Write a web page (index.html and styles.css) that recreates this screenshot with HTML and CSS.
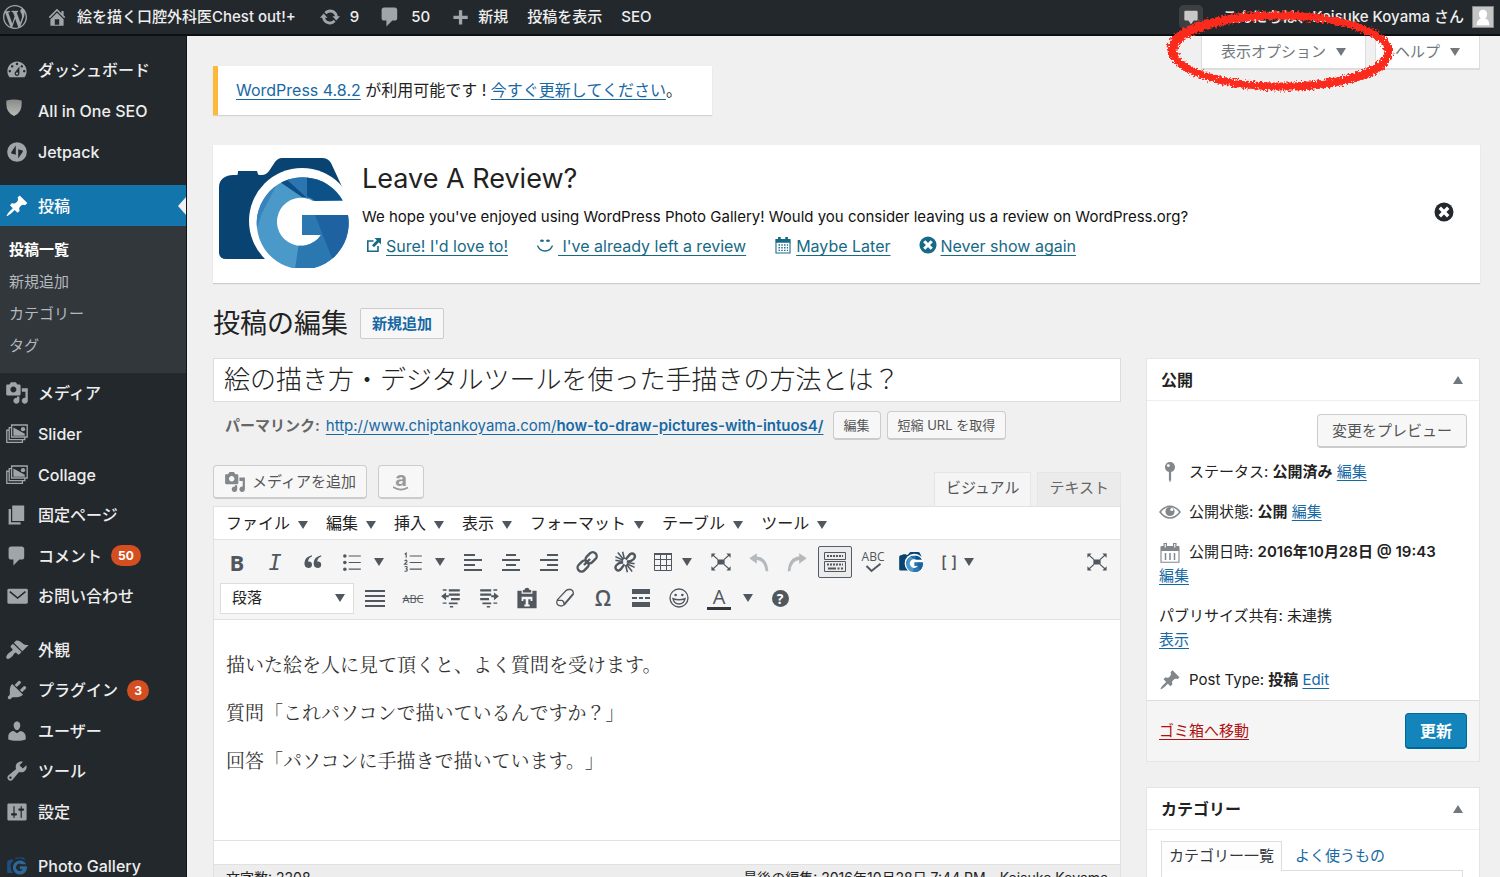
FILE: index.html
```html
<!DOCTYPE html>
<html lang="ja">
<head>
<meta charset="utf-8">
<meta name="viewport" content="width=device-width, initial-scale=1">
<title>投稿の編集 ‹ 絵を描く口腔外科医Chest out!+ — WordPress</title>
<link rel="stylesheet" href="styles.css">
</head>
<body>
<svg class="sprite" aria-hidden="true">
  <defs>
    <clipPath id="g-shape"><path d="M125 43A46 46 0 1 0 130 57H84V77H103A24 24 0 1 1 95 43Z"/></clipPath>
    <filter id="rough" x="-5%" y="-10%" width="110%" height="120%">
      <feTurbulence type="fractalNoise" baseFrequency="0.45" numOctaves="2" seed="4" result="n"/>
      <feDisplacementMap in="SourceGraphic" in2="n" scale="8" xChannelSelector="R" yChannelSelector="G"/>
    </filter>
  </defs>
  <symbol id="camera-g" viewBox="0 0 131 110">
    <path fill="#084372" d="M1 29C1 21 8 17 15 17H19Q20 17 20 13H39Q40 17 41 17H44Q48 17 51 13L57 4Q60 0 64 0H104Q110 0 113 5L126 33L84 101H8Q1 101 1 94Z"/>
    <circle cx="84" cy="63" r="53" fill="#fff"/>
    <path fill="#fff" d="M84 63L131 30V110H84Z"/>
    <g clip-path="url(#g-shape)">
      <rect x="36" y="15" width="96" height="96" fill="#4a99c8"/>
      <path fill="#3983bd" d="M36 15H62L59 26L43 57L38 70H36Z"/>
      <path fill="#3983bd" d="M38 54L43 58L39 70Z"/>
      <path fill="#0d4e86" d="M59 22L66 17L92 40L84 39Z"/>
      <path fill="#2b76b0" d="M64 12H90V41L66 19Z"/>
      <path fill="#0d5189" d="M89 12H131V42L97 43L89 38Z"/>
      <path fill="#2b78b1" d="M81 84L77 111H131L108 77L97 57H84V77Z"/>
      <path fill="#1e62a2" d="M97 57H131V100H114Z"/>
    </g>
  </symbol>
  <symbol id="camera-g-bare" viewBox="0 0 131 110">
    <path fill="#1c5a96" d="M1 29C1 21 8 17 15 17H19Q20 17 20 13H39Q40 17 41 17H44Q48 17 51 13L57 4Q60 0 64 0H104Q110 0 113 5L119 20A55 55 0 0 0 40 101H8Q1 101 1 94Z"/>
    <path fill="#2f7ab5" d="M125 43A46 46 0 1 0 130 57H84V77H103A24 24 0 1 1 95 43Z"/>
  </symbol>
  <symbol id="wp" viewBox="0 0 20 20"><path d="M20 10c0-5.51-4.49-10-10-10C4.48 0 0 4.49 0 10c0 5.52 4.48 10 10 10 5.51 0 10-4.48 10-10zM7.78 15.37L4.37 6.22c.55-.02 1.17-.08 1.17-.08.5-.06.44-1.13-.06-1.11 0 0-1.45.11-2.37.11-.18 0-.37 0-.58-.01C4.12 2.69 6.87 1.11 10 1.11c2.33 0 4.45.87 6.05 2.34-.68-.11-1.65.39-1.65 1.58 0 .74.45 1.36.9 2.1.35.61.55 1.36.55 2.46 0 1.49-1.4 5-1.4 5l-3.03-8.37c.54-.02.82-.17.82-.17.5-.05.44-1.25-.06-1.22 0 0-1.44.12-2.38.12-.87 0-2.33-.12-2.33-.12-.5-.03-.56 1.2-.06 1.22l.92.08 1.26 3.41zM17.41 10c.24-.64.74-1.87.43-4.25.7 1.29 1.05 2.71 1.05 4.25 0 3.29-1.73 6.24-4.4 7.78.97-2.59 1.94-5.2 2.92-7.78zM6.1 18.09C3.12 16.65 1.11 13.53 1.11 10c0-1.3.23-2.48.72-3.59C3.25 10.3 4.67 14.2 6.1 18.09zm4.03-6.63l2.58 6.98c-.86.29-1.76.45-2.71.45-.79 0-1.57-.11-2.29-.33.81-2.38 1.62-4.74 2.42-7.1z"/></symbol>
  <symbol id="home" viewBox="0 0 20 20"><path d="M16 8.5l1.53 1.53-1.06 1.06L10 4.6l-6.47 6.49-1.06-1.06L10 2.5l4 4v-2h2v4zm-6-2.46l6 5.99V18H4v-5.97zM12 17v-5H8v5h4z"/></symbol>
  <symbol id="update" viewBox="0 0 20 20"><path d="M10.2 3.28c3.53 0 6.43 2.61 6.92 6h2.08l-3.5 4-3.5-4h2.32c-.45-1.97-2.21-3.45-4.32-3.45-1.45 0-2.73.71-3.54 1.78L4.95 5.66C6.23 4.2 8.11 3.28 10.2 3.28zm-.4 13.44c-3.52 0-6.43-2.61-6.92-6H.8l3.5-4c1.17 1.33 2.33 2.67 3.5 4H5.48c.45 1.97 2.21 3.45 4.32 3.45 1.45 0 2.73-.71 3.54-1.78l1.71 1.95c-1.28 1.46-3.15 2.38-5.25 2.38z"/></symbol>
  <symbol id="comment" viewBox="0 0 20 20"><path d="M5 2h9c1.1 0 2 .9 2 2v7c0 1.1-.9 2-2 2h-2l-5 5v-5H5c-1.1 0-2-.9-2-2V4c0-1.1.9-2 2-2z"/></symbol>
  <symbol id="note" viewBox="0 0 20 20"><path d="M4 3h12c.8 0 1.400.6 1.400 1.400v8.200c0 .8-.6 1.400-1.400 1.400h-3l-3 4-3-4H4c-.8 0-1.400-.6-1.400-1.400V4.400C2.600 3.600 3.200 3 4 3z"/></symbol>
  <symbol id="plus" viewBox="0 0 20 20"><path d="M17 7v3h-5v5H9v-5H4V7h5V2h3v5h5z"/></symbol>
  <symbol id="dashboard" viewBox="0 0 20 20"><path d="M3.76 16h12.480c1.100-1.370 1.760-3.110 1.760-5 0-4.420-3.580-8-8-8s-8 3.580-8 8c0 1.890.66 3.630 1.760 5zM10 4c.55 0 1 .45 1 1s-.45 1-1 1-1-.45-1-1 .45-1 1-1zM6 6c.55 0 1 .45 1 1s-.45 1-1 1-1-.45-1-1 .45-1 1-1zm8 0c.55 0 1 .45 1 1s-.45 1-1 1-1-.45-1-1 .45-1 1-1zm-5.370 5.550L12 7v6c0 1.100-.9 2-2 2s-2-.9-2-2c0-.57.24-1.080.63-1.450zM4 10c.55 0 1 .45 1 1s-.45 1-1 1-1-.45-1-1 .45-1 1-1zm12 0c.55 0 1 .45 1 1s-.45 1-1 1-1-.45-1-1 .45-1 1-1zm-5 3c0-.55-.45-1-1-1s-1 .45-1 1 .45 1 1 1 1-.45 1-1z"/></symbol>
  <symbol id="shield" viewBox="0 0 20 20"><linearGradient id="sh" x2="0" y2="1"><stop offset="0" stop-color="#888b87"/><stop offset="1" stop-color="#b9bbb7"/></linearGradient><path fill="url(#sh)" d="M1.500 1.500Q9-.5 16.500 1.500Q18 13 9 17Q0 13 1.500 1.500Z"/></symbol>
  <symbol id="jetpack" viewBox="0 0 20 20"><circle cx="10" cy="10" r="8.200"/><path fill="#23282d" d="M9 4.500V12.200L5.400 11.200Q4.800 11 5.200 10.200ZM11 15.500V7.800L14.600 8.800Q15.200 9 14.800 9.800Z"/></symbol>
  <symbol id="pin" viewBox="0 0 20 20"><path d="M10.440 3.020l1.820-1.820 6.360 6.350-1.830 1.820c-1.050-.68-2.480-.57-3.410.36l-.75.75c-.92.93-1.040 2.350-.35 3.410l-1.830 1.820-2.410-2.410-2.800 2.790c-.42.42-3.380 2.710-3.800 2.290s1.860-3.390 2.280-3.810l2.790-2.790L4.100 9.360l1.830-1.820c1.050.69 2.480.57 3.400-.36l.75-.75c.93-.92 1.050-2.350.36-3.410z"/></symbol>
  <symbol id="media" viewBox="0 0 20 20"><path d="M13 11V4c0-.55-.45-1-1-1h-1.670L9 1H5L3.670 3H2c-.55 0-1 .45-1 1v7c0 .55.45 1 1 1h10c.55 0 1-.45 1-1zM7 4.500c1.380 0 2.500 1.120 2.500 2.500S8.380 9.500 7 9.500 4.500 8.380 4.500 7 5.620 4.500 7 4.500zM14 6h5v10.500c0 1.380-1.120 2.500-2.500 2.500S14 17.880 14 16.500s1.120-2.500 2.500-2.500c.17 0 .34.02.5.05V9h-3V6zm-4 8.050V13h2v3.500c0 1.380-1.120 2.500-2.500 2.500S7 17.880 7 16.500 8.120 14 9.500 14c.17 0 .34.02.5.05z"/></symbol>
  <symbol id="images" viewBox="0 0 20 20"><path fill="none" stroke="currentColor" stroke-width="1.100" d="M5.500 2.500H18.500V12.500H5.500ZM5 4.700H3.500V14.700H16.500V13M3 6.900H1.500V17H14.500V15.200"/><path d="M7 4.500L16.500 9.800V11.500H7Z"/><circle cx="15" cy="6" r="1.800"/></symbol>
  <symbol id="page" viewBox="0 0 20 20"><path d="M6 15V2h10v13H6zm-1 1h8v2H3V5h2v11z"/></symbol>
  <symbol id="mail" viewBox="0 0 20 20"><rect x="2" y="4" width="17" height="12.500" rx="1.200"/><path fill="none" stroke="#23282d" stroke-width="1.300" d="M4 6.300L10.500 11.700L17 6.300"/></symbol>
  <symbol id="brush" viewBox="0 0 20 20"><path d="M14.480 11.060L7.410 3.990l1.500-1.500c.5-.56 2.300-.47 3.510.32 1.210.8 1.430 1.280 2.910 2.100 1.180.64 2.450 1.260 4.450.85zm-.71.71L6.700 4.700 4.930 6.470c-.39.39-.39 1.020 0 1.410l1.060 1.060c.39.39.39 1.030 0 1.420-.6.6-1.430 1.110-2.210 1.690-.35.26-.7.53-1.010.84C1.430 14.230.4 16.080 1.400 17.070c.99 1 2.840-.03 4.180-1.360.31-.31.58-.66.85-1.020.57-.78 1.080-1.610 1.690-2.210.39-.39 1.020-.39 1.410 0l1.060 1.060c.39.39 1.020.39 1.410 0z"/></symbol>
  <symbol id="plug" viewBox="0 0 20 20"><path d="M13.110 4.360L9.870 7.600 8 5.730l3.240-3.240c.35-.34 1.050-.2 1.560.32.52.51.66 1.210.31 1.550zm-8 1.770l.91-1.120 9.010 9.010-1.190.84c-.71.71-2.630 1.160-3.820 1.160H6.140L4.900 17.260c-.59.59-1.540.59-2.120 0-.59-.58-.59-1.530 0-2.120l1.240-1.240v-3.880c0-1.130.4-3.190 1.090-3.890zm7.260 3.970l3.240-3.240c.34-.35 1.040-.21 1.550.31.52.51.66 1.210.31 1.550l-3.240 3.250z"/></symbol>
  <symbol id="user" viewBox="0 0 20 20"><path d="M10 9.250c-2.270 0-2.730-3.440-2.730-3.440C7 4.020 7.820 2 9.970 2c2.160 0 2.980 2.020 2.710 3.810 0 0-.41 3.440-2.680 3.440zm0 2.570L12.720 10c2.390 0 4.520 2.330 4.520 4.530v2.490s-3.650 1.130-7.240 1.130c-3.650 0-7.240-1.130-7.240-1.130v-2.490c0-2.250 1.940-4.480 4.470-4.480z"/></symbol>
  <symbol id="wrench" viewBox="0 0 20 20"><path d="M16.680 9.770c-1.340 1.340-3.300 1.670-4.950.99l-5.410 6.520c-.99.99-2.590.99-3.580 0s-.99-2.590 0-3.570l6.520-5.420c-.68-1.650-.35-3.610.99-4.950 1.280-1.280 3.120-1.620 4.720-1.060l-2.890 2.890 2.820 2.820 2.860-2.870c.53 1.580.18 3.390-1.080 4.650zM3.810 16.210c.4.39 1.040.39 1.430 0 .4-.4.4-1.040 0-1.430-.39-.4-1.030-.4-1.430 0-.39.39-.39 1.030 0 1.430z"/></symbol>
  <symbol id="sliders" viewBox="0 0 20 20"><path d="M18 16V4c0-.55-.45-1-1-1H3c-.55 0-1 .45-1 1v12c0 .55.45 1 1 1h14c.55 0 1-.45 1-1zM8 11h1c.55 0 1 .45 1 1s-.45 1-1 1H8v1.500c0 .28-.22.5-.5.5s-.5-.22-.5-.5V13H6c-.55 0-1-.45-1-1s.45-1 1-1h1V5.500c0-.28.22-.5.5-.5s.5.22.5.5V11zm5-2h-1c-.55 0-1-.45-1-1s.45-1 1-1h1V5.500c0-.28.22-.5.5-.5s.5.22.5.5V7h1c.55 0 1 .45 1 1s-.45 1-1 1h-1v5.500c0 .28-.22.5-.5.5s-.5-.22-.5-.5V9z"/></symbol>
  <symbol id="cross-circle" viewBox="0 0 20 20"><circle cx="10" cy="10" r="9.500"/><path fill="none" stroke="#fff" stroke-width="3.400" d="M5.800 5.800L14.200 14.200M14.200 5.800L5.800 14.200"/></symbol>
  <symbol id="external" viewBox="0 0 16 16"><path fill="none" stroke="currentColor" stroke-width="1.600" d="M7.500 4H1.800V14.200H12V9"/><path d="M8.500 1H15V7.500L12.800 5.300L8 10.200L6 8.200L10.800 3.300Z"/></symbol>
  <symbol id="smile" viewBox="0 0 18 16"><path fill="none" stroke="currentColor" stroke-width="1.300" d="M1.500 8.500Q3.500 14 9 14T16.500 8.500"/><path fill="none" stroke="currentColor" stroke-width="1.800" d="M4.500 4.500Q6 2.500 7.500 4.500M10.500 4.500Q12 2.500 13.500 4.500"/></symbol>
  <symbol id="cal" viewBox="0 0 18 20"><path fill="none" stroke="currentColor" stroke-width="1.200" d="M1.200 4H16.800V18.800H1.200Z"/><path d="M1 4H17V7.500H1ZM3.500 1H6.500V5.500H3.500ZM11.500 1H14.500V5.500H11.500Z"/><path fill="none" stroke="currentColor" stroke-width="1.600" stroke-dasharray="1.600 1.500" d="M4 10H14.500M4 13H14.500M4 16H14.500"/></symbol>
  <symbol id="cal-bars" viewBox="0 0 20 20"><path fill="none" stroke="currentColor" stroke-width="1.100" d="M1 4H19V19.200H1Z"/><path d="M1 3H19V8H1ZM3.500 0H7V4H3.500ZM13 0H16.500V4H13Z"/><path fill="#fff" d="M4.700 1H5.800V4.500H4.700ZM14.200 1H15.300V4.500H14.200Z"/><path fill="none" stroke="currentColor" stroke-width="1.500" d="M5.500 10V17M10 10V17M14.500 10V17"/></symbol>
  <symbol id="status-pin" viewBox="0 0 20 20"><circle cx="10" cy="5.500" r="4.600"/><path d="M9 9H11V17L10 19.500L9 17Z"/><circle cx="8.500" cy="4.200" r="1.300" fill="#fff"/></symbol>
  <symbol id="eye" viewBox="0 0 22 20"><path fill="none" stroke="currentColor" stroke-width="1.500" d="M1 10Q5.500 4.200 11 4.200T21 10Q16.500 16 11 16T1 10Z"/><circle cx="11" cy="9.500" r="4.600"/><circle cx="12.800" cy="7.600" r="1.500" fill="#fff"/></symbol>
  <symbol id="quote" viewBox="0 0 20 20"><path d="M9 4.500Q5.500 5.500 5 9.500Q9 9 9 12.800Q8.800 16 5.400 16Q1.400 15.800 1.400 11Q1.600 5 9 3.200ZM18.200 4.500Q14.700 5.500 14.200 9.500Q18.200 9 18.200 12.800Q18 16 14.600 16Q10.600 15.800 10.600 11Q10.800 5 18.200 3.200Z"/></symbol>
  <symbol id="ul" viewBox="0 0 20 20"><path fill="none" stroke="currentColor" stroke-width="1" d="M7 4.500H18M7 10.500H18M7 16.500H18"/><circle cx="3.500" cy="4.500" r="1.600"/><circle cx="3.500" cy="10.500" r="1.600"/><circle cx="3.500" cy="16.500" r="1.600"/></symbol>
  <symbol id="ol" viewBox="0 0 20 20"><path fill="none" stroke="currentColor" stroke-width="1" d="M7 4.500H18M7 10.500H18M7 16.500H18M2.500 3L3.800 2V6.200M2.300 8.800Q4.800 7.500 4.500 9.700L2.300 12H5M2.400 14.300Q4.800 13.500 4.700 15Q4.600 16 3.400 16Q5 16.200 4.800 17.500Q4.400 18.800 2.300 18.200"/></symbol>
  <symbol id="al" viewBox="0 0 24 24"><path d="M3 4H14V6H3ZM3 9H21V11H3ZM3 14H14V16H3ZM3 19H21V21H3Z"/></symbol>
  <symbol id="ac" viewBox="0 0 24 24"><path d="M7 4H17V6H7ZM3 9H21V11H3ZM7 14H17V16H7ZM3 19H21V21H3Z"/></symbol>
  <symbol id="ar" viewBox="0 0 24 24"><path d="M10 4H21V6H10ZM3 9H21V11H3ZM10 14H21V16H10ZM3 19H21V21H3Z"/></symbol>
  <symbol id="aj" viewBox="0 0 24 24"><path d="M2 4H22V6H2ZM2 9H22V11H2ZM2 14H22V16H2ZM2 19H22V21H2Z"/></symbol>
  <symbol id="link" viewBox="0 0 20 20"><g fill="none" stroke="currentColor" stroke-width="2"><rect x="8.300" y="3.300" width="10.400" height="6.600" rx="3.300" transform="rotate(-45 13.300 6.600)"/><rect x="1.600" y="10" width="10.400" height="6.600" rx="3.300" transform="rotate(-45 6.800 13.300)"/><path d="M7.500 12.500L12.500 7.500"/></g></symbol>
  <symbol id="unlink" viewBox="0 0 20 20"><g fill="none" stroke="currentColor" stroke-width="2"><path d="M10.500 8L14 3.700Q16 2 17.700 3.700Q19 5.500 17.300 7.500Q15 10 11.500 9.500M9.500 12L6.500 16Q4.500 18 2.800 16.300Q1.200 14.500 3 12.500Q5 10.200 8.500 10.500"/></g><path fill="none" stroke="currentColor" stroke-width="1.300" d="M8.500 8.500L2 5.500M8.800 8L4 2M9.500 7.500L8 1.500M11.500 11.500L18 14.500M11.200 12L16 18M10.500 12.500L12 18.500M2 8.500L8 9.500M18 11.500L12 10.500"/></symbol>
  <symbol id="grid" viewBox="0 0 24 24"><path fill="none" stroke="currentColor" stroke-width="1" d="M3.500 4V20.500H20.500V4M3 9.500H21M3 15.500H21M9.500 4V21M15.500 4V21"/><path d="M3 3H21V5H3Z"/></symbol>
  <symbol id="expand" viewBox="0 0 20 20"><path d="M7 8H13V12H7ZM2 3H5.500L2 6.500ZM18 3V6.500L14.500 3ZM2 17V13.500L5.500 17ZM18 17H14.500L18 13.500Z"/><path fill="none" stroke="currentColor" stroke-width="1" d="M3 4L7.500 8M17 4L12.500 8M3 16L7.500 12M17 16L12.500 12"/></symbol>
  <symbol id="undo" viewBox="0 0 20 20"><path d="M8 2V5Q17.500 5.500 18.500 18.500H16Q15 8.800 8 8.200V11.500L1.200 6.700Z"/></symbol>
  <symbol id="redo" viewBox="0 0 20 20"><path d="M12 2V5Q2.500 5.500 1.500 18.500H4Q5 8.800 12 8.200V11.500L18.800 6.700Z"/></symbol>
  <symbol id="keyboard" viewBox="0 0 24 24"><path fill="none" stroke="currentColor" stroke-width="1" d="M1.500 2.500H22.500V9.500H1.500ZM1.500 11.500H22.500V21.500H1.500Z"/><path fill="none" stroke="currentColor" stroke-width="2" stroke-dasharray="2 1" d="M4 6H20M4 14.500H20"/><path fill="none" stroke="currentColor" stroke-width="2" d="M5 18.500H13M14.500 18.500H16.500M18 18.500H20"/></symbol>
  <symbol id="check" viewBox="0 0 20 10"><path fill="none" stroke="currentColor" stroke-width="2" d="M3.500 3L8.500 8L17.500 .8"/></symbol>
  <symbol id="outdent" viewBox="0 0 20 20"><path d="M1 8.500L5.500 5V7.600H8V9.400H5.500V12ZM8 6H18V8H8ZM10 10H18V12H10ZM8 14H16V15.600H8ZM8 2H18V4H8ZM2.500 2H6V3.300H2.500ZM2.500 14H6V15.300H2.500ZM9 17.300H12V18.600H9Z"/></symbol>
  <symbol id="indent" viewBox="0 0 20 20"><path d="M19 8.500L14.500 5V7.600H12V9.400H14.500V12ZM2 6H12V8H2ZM2 10H10V12H2ZM4 14H12V15.600H4ZM2 2H12V4H2ZM14 2H17.500V3.300H14ZM14 14H17.500V15.300H14ZM8 17.300H11V18.600H8Z"/></symbol>
  <symbol id="paste" viewBox="0 0 20 20"><path fill-rule="evenodd" d="M2 4H5.500V6.500H14.500V4H18V18.500H2ZM5.500 9V12.500H7V11H8.900V15.500H7.800V17H12.200V15.500H11.100V11H13V12.500H14.500V9Z"/><path d="M6.500 5.500V3.500L8 3.200Q8.200 1.500 10 1.500T12 3.200L13.500 3.500V5.500Z"/></symbol>
  <symbol id="eraser" viewBox="0 0 20 20"><path fill="none" stroke="currentColor" stroke-width="1.200" stroke-linejoin="round" d="M3.200 11.500L11 3.200Q12 2.300 13.500 2.300H15.500Q17.500 3 17.500 5V6.500L9.500 15.800Q8 17.500 6 17.200L3.800 16.500Q2.300 15.500 2.500 13.500ZM2.800 12.200H7Q9 12.500 9.200 15.500"/><path fill="none" stroke="currentColor" stroke-width="1.600" d="M9 16.200L17.300 6.500"/></symbol>
  <symbol id="more" viewBox="0 0 24 24"><path d="M3 3H21V8H3ZM3 16H21V21H3ZM3 11H8V13H3ZM10 11H14V13H10ZM16 11H21V13H16Z"/></symbol>
  <symbol id="emoji" viewBox="0 0 20 20"><circle cx="10" cy="10" r="7.500" fill="none" stroke="currentColor" stroke-width="1.100"/><circle cx="7.200" cy="7.500" r="1.100"/><circle cx="12.800" cy="7.500" r="1.100"/><path fill="none" stroke="currentColor" stroke-width="1.200" d="M5 10.500Q10 12.500 15 10.500Q14 15 10 15T5 10.500Z"/></symbol>
  <symbol id="tri" viewBox="0 0 10 8"><path d="M0 0H10L5 8Z"/></symbol>
</svg>

<header class="adminbar">
  <a class="ab-logo" href="#" aria-label="WordPress"><svg class="ico-24"><use href="#wp"/></svg></a>
  <a class="ab-item" href="#"><svg class="ico-22"><use href="#home"/></svg>絵を描く口腔外科医Chest out!+</a>
  <a class="ab-item" href="#"><svg class="ico-22"><use href="#update"/></svg><span>9</span></a>
  <a class="ab-item" href="#"><svg class="ico-24"><use href="#comment"/></svg><span>50</span></a>
  <a class="ab-item" href="#"><svg class="ico-22 ab-plus"><use href="#plus"/></svg><span>新規</span></a>
  <a class="ab-item" href="#">投稿を表示</a>
  <a class="ab-item" href="#">SEO</a>
  <a class="ab-note" href="#" aria-label="通知"><svg class="ico-18"><use href="#note"/></svg></a>
  <a class="ab-user" href="#">こんにちは、Keisuke Koyama さん
    <svg class="avatar" viewBox="0 0 22 22"><rect width="22" height="22" fill="#c5c5c5"/><path fill="#fff" d="M11 3Q15.500 3 15.500 8Q15.500 11 13.300 12.700Q18 14 18 20H4Q4 14 8.700 12.700Q6.500 11 6.500 8Q6.500 3 11 3Z"/></svg>
  </a>
</header>

<div class="shell">
  <nav class="sidebar" aria-label="メインメニュー">
    <ul class="menu-group">
      <li><a href="#"><svg class="ico-24"><use href="#dashboard"/></svg>ダッシュボード</a></li>
      <li><a href="#"><svg class="ico-20 shield"><use href="#shield"/></svg>All in One SEO</a></li>
      <li><a href="#"><svg class="ico-24"><use href="#jetpack"/></svg>Jetpack</a></li>
    </ul>
    <ul class="menu-group">
      <li class="current"><a href="#"><svg class="ico-24"><use href="#pin"/></svg>投稿</a>
        <ul class="submenu">
          <li><a class="on" href="#">投稿一覧</a></li>
          <li><a href="#">新規追加</a></li>
          <li><a href="#">カテゴリー</a></li>
          <li><a href="#">タグ</a></li>
        </ul>
      </li>
      <li class="short"><a href="#"><svg class="ico-24"><use href="#media"/></svg>メディア</a></li>
      <li><a href="#"><svg class="ico-24"><use href="#images"/></svg>Slider</a></li>
      <li><a href="#"><svg class="ico-24"><use href="#images"/></svg>Collage</a></li>
      <li class="short"><a href="#"><svg class="ico-24"><use href="#page"/></svg>固定ページ</a></li>
      <li><a href="#"><svg class="ico-24"><use href="#comment"/></svg>コメント<span class="badge">50</span></a></li>
      <li class="short"><a href="#"><svg class="ico-24"><use href="#mail"/></svg>お問い合わせ</a></li>
    </ul>
    <ul class="menu-group">
      <li><a href="#"><svg class="ico-24"><use href="#brush"/></svg>外観</a></li>
      <li class="short"><a href="#"><svg class="ico-24"><use href="#plug"/></svg>プラグイン<span class="badge">3</span></a></li>
      <li><a href="#"><svg class="ico-24"><use href="#user"/></svg>ユーザー</a></li>
      <li class="short"><a href="#"><svg class="ico-24"><use href="#wrench"/></svg>ツール</a></li>
      <li><a href="#"><svg class="ico-24"><use href="#sliders"/></svg>設定</a></li>
    </ul>
    <ul class="menu-group">
      <li><a href="#"><svg class="ico-24 gallery"><use href="#camera-g-bare"/></svg>Photo Gallery</a></li>
    </ul>
  </nav>

  <main class="content">
    <div class="top-row">
      <p class="notice"><a href="#">WordPress 4.8.2</a> が利用可能です ! <a href="#">今すぐ更新してください</a>。</p>
      <div class="screen-links">
        <button type="button">表示オプション<svg class="tri"><use href="#tri"/></svg></button>
        <button type="button">ヘルプ<svg class="tri"><use href="#tri"/></svg></button>
      </div>
    </div>

    <section class="review">
      <svg class="review-logo"><use href="#camera-g"/></svg>
      <div class="review-text">
        <h2>Leave A Review?</h2>
        <p>We hope you've enjoyed using WordPress Photo Gallery! Would you consider leaving us a review on WordPress.org?</p>
        <ul>
          <li><svg class="ico-16"><use href="#external"/></svg><a href="#">Sure! I'd love to!</a></li>
          <li><svg class="ico-18"><use href="#smile"/></svg><a href="#">&nbsp;I've already left a review</a></li>
          <li><svg class="ico-18"><use href="#cal"/></svg><a href="#">Maybe Later</a></li>
          <li><svg class="ico-18"><use href="#cross-circle"/></svg><a href="#">Never show again</a></li>
        </ul>
      </div>
      <button class="dismiss" type="button" aria-label="閉じる"><svg class="ico-20"><use href="#cross-circle"/></svg></button>
    </section>

    <div class="heading">
      <h1>投稿の編集</h1>
      <a class="add-new" href="#">新規追加</a>
    </div>

    <div class="columns">
      <div class="primary">
        <input class="title" type="text" aria-label="タイトル" value="絵の描き方・デジタルツールを使った手描きの方法とは？">
        <div class="permalink">
          <strong>パーマリンク:</strong>
          <a href="#">http://www.chiptankoyama.com/<b>how-to-draw-pictures-with-intuos4/</b></a>
          <button class="btn small" type="button">編集</button>
          <button class="btn small" type="button">短縮 URL を取得</button>
        </div>
        <div class="media-row">
          <button class="btn" type="button"><svg class="ico-22"><use href="#media"/></svg>メディアを追加</button>
          <button class="btn amazon" type="button" aria-label="Amazon"><span>a</span><svg viewBox="0 0 16 5"><path d="M0 1Q7 6 15 1.500" fill="none" stroke="currentColor" stroke-width="1.800"/></svg></button>
          <div class="editor-tabs">
            <button class="on" type="button">ビジュアル</button>
            <button type="button">テキスト</button>
          </div>
        </div>
        <div class="editor">
          <div class="menubar">
            <button type="button">ファイル<svg class="tri"><use href="#tri"/></svg></button>
            <button type="button">編集<svg class="tri"><use href="#tri"/></svg></button>
            <button type="button">挿入<svg class="tri"><use href="#tri"/></svg></button>
            <button type="button">表示<svg class="tri"><use href="#tri"/></svg></button>
            <button type="button">フォーマット<svg class="tri"><use href="#tri"/></svg></button>
            <button type="button">テーブル<svg class="tri"><use href="#tri"/></svg></button>
            <button type="button">ツール<svg class="tri"><use href="#tri"/></svg></button>
          </div>
          <div class="toolbar">
            <div class="tools">
              <button class="tool bold" type="button">B</button>
              <button class="tool italic" type="button">I</button>
              <button class="tool" type="button" aria-label="引用"><svg class="ico-20"><use href="#quote"/></svg></button>
              <button class="tool split" type="button" aria-label="番号なしリスト"><svg class="ico-22"><use href="#ul"/></svg><svg class="tri"><use href="#tri"/></svg></button>
              <button class="tool split" type="button" aria-label="番号付きリスト"><svg class="ico-22"><use href="#ol"/></svg><svg class="tri"><use href="#tri"/></svg></button>
              <button class="tool" type="button" aria-label="左揃え"><svg class="ico-24"><use href="#al"/></svg></button>
              <button class="tool" type="button" aria-label="中央揃え"><svg class="ico-24"><use href="#ac"/></svg></button>
              <button class="tool" type="button" aria-label="右揃え"><svg class="ico-24"><use href="#ar"/></svg></button>
              <button class="tool" type="button" aria-label="リンク"><svg class="ico-24"><use href="#link"/></svg></button>
              <button class="tool" type="button" aria-label="リンク解除"><svg class="ico-24"><use href="#unlink"/></svg></button>
              <button class="tool split narrow" type="button" aria-label="表"><svg class="ico-24"><use href="#grid"/></svg><svg class="tri"><use href="#tri"/></svg></button>
              <button class="tool" type="button" aria-label="集中執筆モード"><svg class="ico-24"><use href="#expand"/></svg></button>
              <button class="tool dim" type="button" aria-label="取り消し"><svg class="ico-22"><use href="#undo"/></svg></button>
              <button class="tool dim" type="button" aria-label="やり直し"><svg class="ico-22"><use href="#redo"/></svg></button>
              <button class="tool pressed" type="button" aria-label="ツールバー切り替え"><svg class="ico-24"><use href="#keyboard"/></svg></button>
              <button class="tool spell" type="button"><span>ABC</span><svg><use href="#check"/></svg></button>
              <button class="tool" type="button" aria-label="Photo Gallery"><svg class="ico-24"><use href="#camera-g"/></svg></button>
              <button class="tool split code" type="button"><span>[ ]</span><svg class="tri"><use href="#tri"/></svg></button>
              <button class="tool last" type="button" aria-label="フルスクリーン"><svg class="ico-24"><use href="#expand"/></svg></button>
            </div>
            <div class="tools">
              <span class="format"><select aria-label="書式"><option>段落</option></select><svg class="tri"><use href="#tri"/></svg></span>
              <button class="tool" type="button" aria-label="両端揃え"><svg class="ico-24"><use href="#aj"/></svg></button>
              <button class="tool strike" type="button">ABC</button>
              <button class="tool" type="button" aria-label="インデントを減らす"><svg class="ico-22"><use href="#outdent"/></svg></button>
              <button class="tool" type="button" aria-label="インデントを増やす"><svg class="ico-22"><use href="#indent"/></svg></button>
              <button class="tool" type="button" aria-label="テキストとしてペースト"><svg class="ico-24"><use href="#paste"/></svg></button>
              <button class="tool" type="button" aria-label="書式設定をクリア"><svg class="ico-22"><use href="#eraser"/></svg></button>
              <button class="tool omega" type="button">Ω</button>
              <button class="tool" type="button" aria-label="続きを読む"><svg class="ico-24"><use href="#more"/></svg></button>
              <button class="tool" type="button" aria-label="絵文字"><svg class="ico-24"><use href="#emoji"/></svg></button>
              <button class="tool split color" type="button"><span>A</span><svg class="tri"><use href="#tri"/></svg></button>
              <button class="tool help" type="button"><span>?</span></button>
            </div>
          </div>
          <div class="body" contenteditable="true" spellcheck="false" role="textbox" aria-label="本文">
            <p>描いた絵を人に見て頂くと、よく質問を受けます。</p>
            <p>質問「これパソコンで描いているんですか？」</p>
            <p>回答「パソコンに手描きで描いています。」</p>
          </div>
          <div class="path"></div>
          <div class="status"><span>文字数: 2208</span><span>最後の編集: 2016年10月28日 7:44 PM、Keisuke Koyama</span></div>
        </div>
      </div>

      <aside class="secondary">
        <section class="box">
          <h2>公開<svg class="tri up"><use href="#tri"/></svg></h2>
          <div class="publish">
            <button class="btn preview" type="button">変更をプレビュー</button>
            <p><svg class="ico-22"><use href="#status-pin"/></svg>ステータス: <b>公開済み</b> <a href="#">編集</a></p>
            <p><svg class="ico-22"><use href="#eye"/></svg>公開状態: <b>公開</b> <a href="#">編集</a></p>
            <p><svg class="ico-20"><use href="#cal-bars"/></svg>公開日時: <b>2016年10月28日 @ 19:43</b><br><a href="#">編集</a></p>
            <p>パブリサイズ共有: 未連携<br><a href="#">表示</a></p>
            <p><svg class="ico-22"><use href="#pin"/></svg>Post Type: <b>投稿</b> <a href="#">Edit</a></p>
          </div>
          <div class="publish-foot">
            <a href="#">ゴミ箱へ移動</a>
            <button type="submit">更新</button>
          </div>
        </section>
        <section class="box">
          <h2>カテゴリー<svg class="tri up"><use href="#tri"/></svg></h2>
          <div class="cats">
            <div class="cat-tabs"><a class="on" href="#">カテゴリー一覧</a><a href="#">よく使うもの</a></div>
            <div class="cat-panel"></div>
          </div>
        </section>
      </aside>
    </div>
  </main>
</div>

<svg class="marker" viewBox="0 0 240 96" aria-hidden="true">
  <g fill="none" stroke="#fc2b1c" filter="url(#rough)">
    <ellipse cx="120" cy="49" rx="109" ry="36" stroke-width="7" transform="rotate(1 120 49)"/>
    <ellipse cx="121" cy="49" rx="107" ry="35" stroke-width="7"/>
  </g>
</svg>
</body>
</html>
```
FILE: styles.css
```css
* { box-sizing: border-box; }

body {
  margin: 0;
  height: 100vh;
  overflow: hidden;
  background: #f0f0f0;
  color: #222;
  font: 15px/24px Inter, "Noto Sans CJK JP", sans-serif;
}

a { color: #1769a5; text-underline-offset: 3px; }
b, strong { font-weight: 600; }
ul { margin: 0; padding: 0; list-style: none; }
h1, h2, p { margin: 0; }
button, input, select { font: inherit; color: inherit; margin: 0; }
button { border: 0; background: none; padding: 0; cursor: pointer; }
svg { fill: currentColor; flex: none; }

.sprite { position: absolute; width: 0; height: 0; }
.ico-16 { width: 16px; height: 16px; }
.ico-18 { width: 18px; height: 18px; }
.ico-20 { width: 20px; height: 20px; }
.ico-22 { width: 22px; height: 22px; }
.ico-24 { width: 24px; height: 24px; }
.tri { width: 10px; height: 8px; }

/* Admin bar */
.adminbar {
  display: flex;
  align-items: center;
  gap: 19px;
  height: 36px;
  padding: 0 6px 0 3px;
  background: #23282d;
  border-bottom: 2px solid #0d0f10;
  color: #eee;
  font-weight: 500;
}
.adminbar a { display: flex; align-items: center; color: inherit; text-decoration: none; white-space: nowrap; }
.adminbar svg { color: #a0a5aa; }
.ab-item { gap: 9px; font-size: 15px; }
.ab-item:nth-child(2) { margin-right: 4px; }
.ab-plus { margin: 3px -2px 0 0; }
.adminbar .ab-note {
  margin-left: auto;
  padding: 3px;
  border-radius: 5px;
  background: #3d4042;
}
.adminbar .ab-note svg { color: #c8c8c8; }
.ab-user { gap: 8px; }
.avatar { width: 22px; height: 22px; border: 1px solid #82878c; }

/* Side menu */
.shell { display: flex; }
.sidebar {
  flex: none;
  width: 187px;
  height: calc(100vh - 36px);
  overflow: hidden;
  padding-top: 13px;
  background: #23282d;
  border-right: 1px solid #111416;
  color: #eee;
  font-size: 16px;
  font-weight: 500;
}
.menu-group { padding-bottom: 13px; }
.sidebar a { display: flex; align-items: center; color: inherit; text-decoration: none; white-space: nowrap; }
.menu-group > li > a { height: 41px; padding-left: 5px; gap: 9px; }
.menu-group > .short > a { height: 40px; }
.sidebar svg { color: #a0a5aa; }
.sidebar .shield { margin: 0 4px 4px 0; }
.sidebar .gallery { padding: 2px; opacity: .8; }
.menu-group > .current > a { position: relative; background: #1275ab; color: #fff; }
.current > a svg { color: #fff; }
.current > a::after {
  content: "";
  position: absolute;
  right: -1px;
  top: 11px;
  border: solid transparent;
  border-width: 10px 9px 10px 0;
  border-right-color: #f0f0f0;
}
.submenu { padding: 8px 0 11px; background: #32373c; font-size: 15px; font-weight: 400; color: #b4b9be; }
.submenu a { height: 32px; padding-left: 9px; }
.submenu .on { color: #fff; font-weight: 700; }
.badge {
  min-width: 22px;
  padding: 0 7px;
  border-radius: 11px;
  background: #d54e21;
  color: #fff;
  font-size: 12px;
  font-weight: 700;
  line-height: 21px;
  text-align: center;
}

/* Content */
.content {
  flex: 1;
  min-width: 0;
  height: calc(100vh - 36px);
  overflow: hidden;
  padding: 0 20px 0 26px;
}
.top-row { display: flex; justify-content: space-between; align-items: flex-start; }
.notice {
  margin-top: 30px;
  padding: 12px 30px 12px 18px;
  border-left: 5px solid #ffb93a;
  background: #fff;
  box-shadow: 0 1px 1px rgba(0, 0, 0, .12);
  font-size: 16px;
  line-height: 25px;
}
.screen-links { display: flex; gap: 9px; }
.screen-links button {
  display: flex;
  align-items: center;
  gap: 10px;
  height: 34px;
  padding: 0 19px;
  border: 1px solid #ddd;
  border-top: 0;
  border-bottom-width: 2px;
  background: #fff;
  color: #72777c;
  font-size: 15px;
}
.screen-links .tri { color: #72777c; }

.review {
  display: flex;
  align-items: center;
  gap: 13px;
  margin-top: 30px;
  padding: 13px 26px 17px 5px;
  background: #fff;
  box-shadow: 0 1px 1px rgba(0, 0, 0, .15);
}
.review-logo { width: 131px; height: 110px; align-self: flex-start; margin-bottom: -2px; }
.review-text { flex: 1; height: 108px; color: #111; }
.review h2 { font-size: 27px; font-weight: 400; line-height: 42px; color: #222; }
.review p { margin-top: 5px; font-size: 15px; }
.review ul { display: flex; gap: 28px; margin-top: 5px; padding-left: 4px; font-size: 16px; color: #176a86; }
.review li { display: flex; align-items: center; gap: 4px; }
.review li svg { margin-bottom: 3px; }
.review li a { color: inherit; }
.dismiss { display: flex; color: #23282d; }

.heading { display: flex; align-items: center; gap: 12px; margin-top: 25px; }
.heading h1 { font-size: 27px; font-weight: 400; line-height: 31px; }
.add-new {
  padding: 2px 11px;
  border: 1px solid #ccc;
  border-radius: 2px;
  background: #f7f7f7;
  font-weight: 600;
  line-height: 25px;
  text-decoration: none;
}

.columns { display: flex; align-items: flex-start; gap: 25px; margin-top: 19px; }
.primary { flex: 1; min-width: 0; }
.secondary { flex: none; width: 334px; display: grid; gap: 25px; }

.title {
  display: block;
  width: 100%;
  height: 44px;
  padding: 0 10px 5px;
  border: 1px solid #ddd;
  background: #fff;
  color: #222;
  font-size: 26px;
  font-weight: 300;
}
.permalink { display: flex; align-items: center; gap: 6px; margin-top: 9px; padding-left: 12px; white-space: nowrap; }
.permalink a { margin-right: 3px; }
.permalink strong { color: #666; }

.btn {
  display: flex;
  align-items: center;
  gap: 6px;
  height: 34px;
  padding: 0 10px;
  border: 1px solid #ccc;
  border-bottom-width: 2px;
  border-radius: 4px;
  background: #f7f7f7;
  color: #555;
}
.btn.small { height: 29px; padding: 0 10px; font-size: 13px; }
.btn svg { color: #82878c; }

.media-row { display: flex; gap: 11px; height: 41px; margin-top: 25px; }
.amazon { flex-direction: column; justify-content: center; gap: 0; width: 46px; color: #999; }
.amazon span { font-size: 20px; font-weight: 700; line-height: 14px; }
.amazon svg { width: 16px; height: 5px; color: #999; }
.editor-tabs { display: flex; align-items: flex-end; gap: 6px; margin-left: auto; }
.editor-tabs button {
  height: 34px;
  padding: 0 11px 3px;
  border: 1px solid #e5e5e5;
  border-bottom: 0;
  background: #ebebeb;
  color: #666;
}
.editor-tabs .on { background: #f5f5f5; color: #555; }

.editor { border: 1px solid #e1e1e1; background: #fff; }
.menubar { display: flex; gap: 18px; height: 32px; padding-left: 12px; font-size: 16px; }
.menubar button { display: flex; align-items: center; gap: 8px; }
.menubar .tri { margin-top: 4px; }
.tri { color: #50575e; }

.toolbar { padding: 4px 6px 3px; border: solid #e1e1e1; border-width: 1px 0; background: #f5f5f5; color: #50575e; }
.tools { display: flex; align-items: center; gap: 4px; height: 36px; }
.tool { display: flex; align-items: center; justify-content: center; width: 34px; height: 32px; }
.tool.split { width: 57px; justify-content: flex-start; padding-left: 7px; gap: 11px; }
.tool.narrow { width: 54px; padding-left: 5px; gap: 7px; }
.tool.last { margin-left: auto; }
.tool.bold { font: 700 22px "Open Sans", sans-serif; }
.tool.italic { font: italic 400 22px "DejaVu Sans Mono", monospace; }
.tool.dim { color: #b4b9be; }
.tool.pressed { border: 1px solid #555d66; border-radius: 2px; background: #ebebeb; }
.tool.spell { flex-direction: column; font: 12px/12px "Open Sans", sans-serif; }
.tool.spell svg { width: 20px; height: 10px; }
.tool.code { gap: 7px; padding-left: 9px; font-size: 16px; font-weight: 500; }
.tool.strike { font: 11px "Open Sans", sans-serif; text-decoration: line-through; }
.tool.omega { font: 600 21px "Open Sans", sans-serif; }
.tool.color { gap: 12px; width: 59px; }
.tool.color span { width: 24px; border-bottom: 3px solid #32373c; font: 20px/20px "Open Sans", sans-serif; }
.help span { width: 17px; border-radius: 9px; background: #50575e; color: #fff; font: 700 14px/17px "Open Sans", sans-serif; }

.format { display: flex; align-items: center; width: 134px; height: 31px; padding-right: 8px; border: 1px solid #ddd; background: #fff; }
.format select { flex: 1; height: 29px; padding: 0 11px; border: 0; background: none; appearance: none; color: #222; }

.body {
  min-height: 220px;
  padding: 29px 12px 18px;
  font: 19px/30px "Noto Serif CJK JP", "Liberation Serif", serif;
  text-spacing-trim: space-all;
  color: #333;
}
.body p { margin-bottom: 18px; }
.path { height: 24px; border-top: 1px solid #e1e1e1; }
.status { display: flex; justify-content: space-between; padding: 1px 12px; border-top: 1px solid #e1e1e1; background: #ededed; font-size: 14px; }

/* Meta boxes */
.box { border: 1px solid #e5e5e5; background: #fff; }
.box h2 {
  display: flex;
  align-items: center;
  justify-content: space-between;
  height: 42px;
  padding: 0 16px 0 14px;
  border-bottom: 1px solid #eee;
  font-size: 16px;
  font-weight: 600;
}
.tri.up { transform: rotate(180deg); color: #72777c; }
.publish { padding: 13px 12px 0; }
.preview { margin: 0 0 4px auto; padding: 0 14px; }
.publish p { padding: 8px 0; }
.publish p svg { margin-right: 8px; vertical-align: -6px; color: #82878c; }
.publish p .ico-20 { margin: 0 9px 0 1px; }
.publish-foot {
  display: flex;
  align-items: center;
  justify-content: space-between;
  padding: 12px;
  border-top: 1px solid #ddd;
  background: #f5f5f5;
}
.publish-foot a { color: #b01010; }
.publish-foot button {
  height: 36px;
  padding: 0 14px;
  border: 1px solid #006799;
  border-bottom-width: 2px;
  border-radius: 4px;
  background: #1485ba;
  color: #fff;
  font-size: 16px;
  font-weight: 600;
}
.cats { padding: 11px 16px 16px 14px; }
.cat-tabs { display: flex; gap: 5px; }
.cat-tabs a { padding: 2px 7px; border: 1px solid transparent; border-bottom: 0; text-decoration: none; }
.cat-tabs .on { margin-bottom: -1px; border-color: #ddd; background: #fdfdfd; color: #32373c; }
.cat-panel { height: 200px; border: 1px solid #ddd; }

/* Hand-drawn ring around the screen options tab */
.marker { position: absolute; top: 2px; right: 100px; width: 240px; height: 96px; pointer-events: none; }
```
